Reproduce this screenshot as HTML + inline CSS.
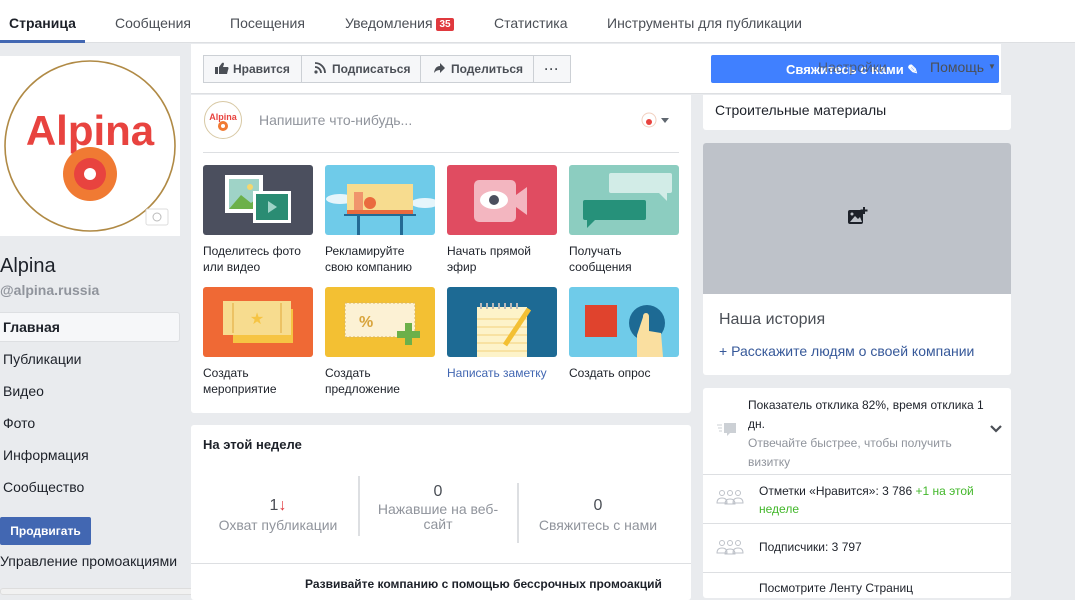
<!DOCTYPE html>
<html><head><meta charset="utf-8"><style>
*{margin:0;padding:0;box-sizing:border-box}
body{width:1075px;height:595px;overflow:hidden;background:#e9ebee;font-family:"Liberation Sans",Arial,sans-serif;color:#1d2129;font-size:13px;position:relative}
.a{position:absolute}
.nav{left:0;top:0;width:1075px;height:43px;background:#fff;border-bottom:1px solid #dddfe2}
.nav span{position:absolute;top:15px;font-size:14px;color:#4b4f56}
.w{background:#fff}
.btn{position:absolute;top:55px;height:28px;border:1px solid #ccd0d5;background:#f6f7f9;font-weight:bold;font-size:12px;color:#4b4f56;line-height:26px}
.tile{position:absolute;width:110px;height:70px;border-radius:3px;overflow:hidden}
.lbl{position:absolute;font-size:12px;line-height:16px;color:#1d2129}
.menu{position:absolute;left:3px;font-size:14px;color:#1d2129}
</style></head><body>
<div class="a nav">
<span style="left:9px;color:#1d2129;font-weight:bold">Страница</span>
<span style="left:115px">Сообщения</span>
<span style="left:230px">Посещения</span>
<span style="left:345px">Уведомления <b style="background:#e0393e;color:#fff;font-size:10px;padding:1px 3px;border-radius:2px;position:relative;top:-1px">35</b></span>
<span style="left:494px">Статистика</span>
<span style="left:607px">Инструменты для публикации</span>
<div class="a" style="left:0;top:40px;width:85px;height:3px;background:#4267b2"></div>
</div>
<!-- left -->
<div class="a w" style="left:0;top:56px;width:180px;height:180px">
<svg width="180" height="180" viewBox="0 0 180 180"><circle cx="90" cy="90" r="85" fill="none" stroke="#b08a45" stroke-width="1.6"/>
<text x="90" y="89" text-anchor="middle" font-family="Liberation Sans" font-weight="bold" font-size="42" fill="#e8433f">Alpina</text>
<circle cx="90" cy="118" r="27" fill="#f07a33"/><circle cx="90" cy="118" r="16" fill="#e8433f"/><circle cx="90" cy="118" r="6" fill="#fff"/>
<rect x="146" y="153" width="22" height="16" rx="2" fill="#fff" stroke="#ddd"/><circle cx="157" cy="161" r="4" fill="none" stroke="#bbb"/></svg>
</div>
<div class="a" style="left:0;top:255px;font-size:20px;color:#1d2129">Alpina</div>
<div class="a" style="left:0;top:282px;font-size:14px;font-weight:bold;color:#90949c">@alpina.russia</div>
<div class="a" style="left:0;top:312px;width:180px;height:30px;background:#f6f7f9;border:1px solid #dddfe2;border-left:0;border-radius:0 3px 3px 0"></div>
<div class="menu" style="top:319px;font-weight:bold">Главная</div>
<div class="menu" style="top:351px">Публикации</div>
<div class="menu" style="top:383px">Видео</div>
<div class="menu" style="top:415px">Фото</div>
<div class="menu" style="top:447px">Информация</div>
<div class="menu" style="top:479px">Сообщество</div>
<div class="a" style="left:0;top:517px;width:91px;height:28px;background:#4267b2;border-radius:2px;color:#fff;font-weight:bold;font-size:12px;line-height:28px;text-align:center">Продвигать</div>
<div class="a" style="left:0;top:553px;font-size:14px">Управление промоакциями</div>
<div class="a" style="left:0;top:588px;width:388px;height:7px;background:#f1f1f1;border:1px solid #ddd;border-radius:3px"></div>
<!-- top strip -->
<div class="a w" style="left:191px;top:44px;width:810px;height:50px;border-bottom:1px solid #dddfe2"></div>
<div class="btn" style="left:203px;width:99px;padding-left:11px"><svg width="14" height="12" style="vertical-align:-1px;margin-right:4px"><rect x="0" y="5" width="3" height="7" fill="#4b4f56"/><path d="M4 5 L7 1 Q9 0 9 2 L8 5 L13 5 Q14 6 13 8 L12 12 L4 12Z" fill="#4b4f56"/></svg>Нравится</div>
<div class="btn" style="left:301px;width:120px;padding-left:12px"><svg width="13" height="12" style="vertical-align:-1px;margin-right:5px"><circle cx="2" cy="10" r="1.6" fill="#4b4f56"/><path d="M1 5 A6 6 0 0 1 7 11 M1 1 A10 10 0 0 1 11 11" stroke="#4b4f56" stroke-width="1.8" fill="none"/></svg>Подписаться</div>
<div class="btn" style="left:420px;width:114px;padding-left:12px"><svg width="13" height="12" style="vertical-align:-1px;margin-right:5px"><path d="M7 1 L12 6 L7 11 L7 8 Q3 8 1 11 Q2 4 7 4Z" fill="#4b4f56"/></svg>Поделиться</div>
<div class="btn" style="left:533px;width:38px;text-align:center;letter-spacing:1px">···</div>
<div class="a" style="left:711px;top:55px;width:288px;height:28px;background:#4080ff;border-radius:2px"></div>
<div class="a" style="left:786px;top:62px;font-weight:bold;font-size:13px;color:#fff">Свяжитесь с нами ✎</div>
<div class="a" style="left:818px;top:59px;font-size:14px;color:rgba(75,79,86,.75)">Настройки</div>
<div class="a" style="left:930px;top:59px;font-size:14px;color:#4b4f56">Помощь <span style="font-size:8px;vertical-align:3px">▼</span></div>
<!-- center card -->
<div class="a w" style="left:191px;top:95px;width:500px;height:318px;border-radius:0 0 3px 3px"></div>
<svg class="a" style="left:203px;top:100px" width="40" height="40"><circle cx="20" cy="20" r="18.5" fill="#fff" stroke="#d8c9a5"/><text x="20" y="20" text-anchor="middle" font-weight="bold" font-size="9" fill="#e8433f" font-family="Liberation Sans">Alpina</text><circle cx="20" cy="26" r="5" fill="#f07a33"/><circle cx="20" cy="26" r="2" fill="#fff"/></svg>
<div class="a" style="left:259px;top:112px;font-size:14px;color:#90949c">Напишите что-нибудь...</div>
<svg class="a" style="left:641px;top:112px" width="30" height="16"><circle cx="8" cy="8" r="7" fill="#fff" stroke="#f1d0c0"/><circle cx="8" cy="10" r="3" fill="#e8433f"/><path d="M20 6 L28 6 L24 11Z" fill="#606770"/></svg>
<div class="a" style="left:203px;top:152px;width:476px;height:1px;background:#dddfe2"></div>
<!-- tiles -->
<div class="tile" style="left:203px;top:165px;background:#4b4f5e"><svg width="110" height="70"><rect x="22" y="10" width="38" height="38" fill="#fff"/><rect x="26" y="14" width="30" height="30" fill="#9fd3c7"/><path d="M26 44 L38 30 L48 38 L56 32 L56 44Z" fill="#6cb04a"/><circle cx="47" cy="22" r="3" fill="#f5d76e"/><rect x="50" y="26" width="38" height="32" fill="#fff"/><rect x="53" y="29" width="32" height="26" fill="#2a8c73"/><path d="M65 36 L74 42 L65 48Z" fill="#9fd3c7"/></svg></div>
<div class="tile" style="left:325px;top:165px;background:#6fcbe9"><svg width="110" height="70"><ellipse cx="15" cy="34" rx="14" ry="5" fill="#e6f5fb"/><ellipse cx="100" cy="38" rx="14" ry="5" fill="#e6f5fb"/><rect x="22" y="19" width="66" height="26" fill="#f7dc8f"/><rect x="29" y="27" width="9" height="18" fill="#f0956c"/><circle cx="45" cy="38" r="6" fill="#ea6b3e"/><rect x="22" y="45" width="66" height="4" fill="#ea6b3e"/><rect x="19" y="49" width="72" height="2" fill="#236a94"/><rect x="32" y="51" width="3" height="19" fill="#236a94"/><rect x="75" y="51" width="3" height="19" fill="#236a94"/></svg></div>
<div class="tile" style="left:447px;top:165px;background:#e04c61"><svg width="110" height="70"><rect x="27" y="15" width="42" height="42" rx="5" fill="#f3b6c0"/><path d="M69 30 L80 22 L80 50 L69 42Z" fill="#f3b6c0"/><ellipse cx="47" cy="35" rx="14" ry="9" fill="#fff"/><circle cx="47" cy="35" r="5" fill="#4b4f5e"/></svg></div>
<div class="tile" style="left:569px;top:165px;background:#8ccdc0"><svg width="110" height="70"><rect x="40" y="8" width="63" height="20" rx="2" fill="#d2ece7"/><path d="M90 28 L98 28 L98 36Z" fill="#d2ece7"/><rect x="14" y="35" width="63" height="20" rx="2" fill="#26917a"/><path d="M18 55 L26 55 L18 63Z" fill="#26917a"/></svg></div>
<div class="tile" style="left:203px;top:287px;background:#ef6935"><svg width="110" height="70"><rect x="30" y="22" width="60" height="34" fill="#f6c443"/><rect x="20" y="14" width="68" height="34" fill="#f7dc8f"/><line x1="30" y1="16" x2="30" y2="46" stroke="#e0a83a"/><line x1="78" y1="16" x2="78" y2="46" stroke="#e0a83a"/><text x="54" y="37" text-anchor="middle" font-size="16" fill="#f6c443">★</text></svg></div>
<div class="tile" style="left:325px;top:287px;background:#f3c033"><svg width="110" height="70"><rect x="20" y="16" width="70" height="34" fill="#fcf1d4" stroke="#d8b560" stroke-dasharray="2 2"/><text x="34" y="40" font-size="16" fill="#d8a33a" font-weight="bold">%</text><rect x="80" y="36" width="7" height="22" fill="#6cb04a"/><rect x="72" y="44" width="23" height="7" fill="#6cb04a"/></svg></div>
<div class="tile" style="left:447px;top:287px;background:#1d6a94"><svg width="110" height="70"><rect x="30" y="20" width="50" height="52" fill="#fdf3c9"/><g stroke="#f3d27a"><line x1="30" y1="32" x2="80" y2="32"/><line x1="30" y1="40" x2="80" y2="40"/><line x1="30" y1="48" x2="80" y2="48"/><line x1="30" y1="56" x2="80" y2="56"/><line x1="30" y1="64" x2="80" y2="64"/></g><g stroke="#bbb" stroke-width="2"><line x1="34" y1="16" x2="34" y2="22"/><line x1="40" y1="16" x2="40" y2="22"/><line x1="46" y1="16" x2="46" y2="22"/><line x1="52" y1="16" x2="52" y2="22"/><line x1="58" y1="16" x2="58" y2="22"/><line x1="64" y1="16" x2="64" y2="22"/><line x1="70" y1="16" x2="70" y2="22"/></g><line x1="58" y1="58" x2="82" y2="22" stroke="#f3c033" stroke-width="5"/></svg></div>
<div class="tile" style="left:569px;top:287px;background:#6fcbe9"><svg width="110" height="70"><rect x="16" y="18" width="32" height="32" fill="#e0432d"/><circle cx="78" cy="36" r="18" fill="#1d6a94"/><path d="M74 30 Q74 26 77 26 Q80 26 80 30 L80 44 L92 46 L94 70 L68 70 L68 48 Z" fill="#fadfa0"/></svg></div>
<div class="lbl" style="left:203px;top:243px">Поделитесь фото<br>или видео</div>
<div class="lbl" style="left:325px;top:243px">Рекламируйте<br>свою компанию</div>
<div class="lbl" style="left:447px;top:243px">Начать прямой<br>эфир</div>
<div class="lbl" style="left:569px;top:243px">Получать<br>сообщения</div>
<div class="lbl" style="left:203px;top:365px">Создать<br>мероприятие</div>
<div class="lbl" style="left:325px;top:365px">Создать<br>предложение</div>
<div class="lbl" style="left:447px;top:365px;color:#4267b2">Написать заметку</div>
<div class="lbl" style="left:569px;top:365px">Создать опрос</div>
<!-- week card -->
<div class="a w" style="left:191px;top:425px;width:500px;height:175px;border-radius:3px"></div>
<div class="a" style="left:203px;top:437px;font-weight:bold;font-size:13px">На этой неделе</div>
<div class="a" style="left:358px;top:476px;width:2px;height:60px;background:#dddfe2"></div>
<div class="a" style="left:517px;top:483px;width:2px;height:60px;background:#dddfe2"></div>
<div class="a" style="left:198px;top:497px;width:160px;text-align:center;font-size:16px;color:#4b4f56">1<span style="color:#e0393e;font-weight:bold">↓</span></div>
<div class="a" style="left:198px;top:517px;width:160px;text-align:center;font-size:14px;color:#90949c">Охват публикации</div>
<div class="a" style="left:358px;top:483px;width:160px;text-align:center;font-size:16px;color:#4b4f56">0</div>
<div class="a" style="left:358px;top:502px;width:160px;text-align:center;font-size:14px;line-height:15px;color:#90949c">Нажавшие на веб-<br>сайт</div>
<div class="a" style="left:518px;top:497px;width:160px;text-align:center;font-size:16px;color:#4b4f56">0</div>
<div class="a" style="left:518px;top:517px;width:160px;text-align:center;font-size:14px;color:#90949c">Свяжитесь с нами</div>
<div class="a" style="left:191px;top:563px;width:500px;height:1px;background:#dddfe2"></div>
<div class="a" style="left:305px;top:577px;font-weight:bold;font-size:12px">Развивайте компанию с помощью бессрочных промоакций</div>
<!-- right -->
<div class="a w" style="left:703px;top:95px;width:308px;height:35px;border-radius:0 0 3px 3px"></div>
<div class="a" style="left:715px;top:102px;font-size:14px">Строительные материалы</div>
<div class="a w" style="left:703px;top:143px;width:308px;height:232px;border-radius:3px;overflow:hidden"><div style="height:151px;background:#bec2c9"></div></div>
<svg class="a" style="left:847px;top:206px" width="22" height="20"><rect x="1" y="4" width="15" height="14" rx="2" fill="#1d2129"/><circle cx="5" cy="8" r="1.5" fill="#bec2c9"/><path d="M3 16 L8 10 L11 13 L13 11 L15 16Z" fill="#bec2c9"/><path d="M17 1 V8 M13.5 4.5 H20.5" stroke="#1d2129" stroke-width="2"/></svg>
<div class="a" style="left:719px;top:311px;font-size:16px;color:#4b4f56">Наша история</div>
<div class="a" style="left:719px;top:343px;font-size:14px;color:#365899">+ Расскажите людям о своей компании</div>
<div class="a w" style="left:703px;top:388px;width:308px;height:210px;border-radius:3px"></div>
<div class="a" style="left:748px;top:396px;font-size:12px;line-height:19px;width:245px">Показатель отклика 82%, время отклика 1 дн.<br><span style="color:#90949c">Отвечайте быстрее, чтобы получить визитку</span></div>
<svg class="a" style="left:716px;top:422px" width="22" height="16"><g stroke="#ccd0d5"><line x1="1" y1="3" x2="6" y2="3"/><line x1="2" y1="6" x2="6" y2="6"/><line x1="3" y1="9" x2="6" y2="9"/></g><rect x="8" y="1" width="12" height="10" fill="#ccd0d5"/><path d="M11 11 L11 14 L14 11Z" fill="#ccd0d5"/></svg>
<svg class="a" style="left:989px;top:424px" width="14" height="10"><path d="M2 2 L7 7 L12 2" stroke="#4b4f56" stroke-width="2.2" fill="none"/></svg>
<div class="a" style="left:703px;top:474px;width:308px;height:1px;background:#dddfe2"></div>
<svg class="a" style="left:716px;top:489px" width="28" height="18"><g fill="none" stroke="#bec2c9"><circle cx="6" cy="4" r="2.5"/><circle cx="14" cy="4" r="2.5"/><circle cx="22" cy="4" r="2.5"/><path d="M1 14 Q1 9 6 9 Q11 9 11 14 Z M9 15 Q9 10 14 10 Q19 10 19 15Z M17 14 Q17 9 22 9 Q27 9 27 14Z"/></g></svg>
<div class="a" style="left:759px;top:482px;font-size:12px;line-height:18px;width:240px">Отметки «Нравится»: 3 786 <span style="color:#42b72a">+1 на этой неделе</span></div>
<div class="a" style="left:703px;top:523px;width:308px;height:1px;background:#dddfe2"></div>
<svg class="a" style="left:716px;top:539px" width="28" height="18"><g fill="none" stroke="#bec2c9"><circle cx="6" cy="4" r="2.5"/><circle cx="14" cy="4" r="2.5"/><circle cx="22" cy="4" r="2.5"/><path d="M1 14 Q1 9 6 9 Q11 9 11 14 Z M9 15 Q9 10 14 10 Q19 10 19 15Z M17 14 Q17 9 22 9 Q27 9 27 14Z"/></g></svg>
<div class="a" style="left:759px;top:540px;font-size:12px">Подписчики: 3 797</div>
<div class="a" style="left:703px;top:572px;width:308px;height:1px;background:#dddfe2"></div>
<div class="a" style="left:759px;top:581px;font-size:12px">Посмотрите Ленту Страниц</div>
</body></html>
